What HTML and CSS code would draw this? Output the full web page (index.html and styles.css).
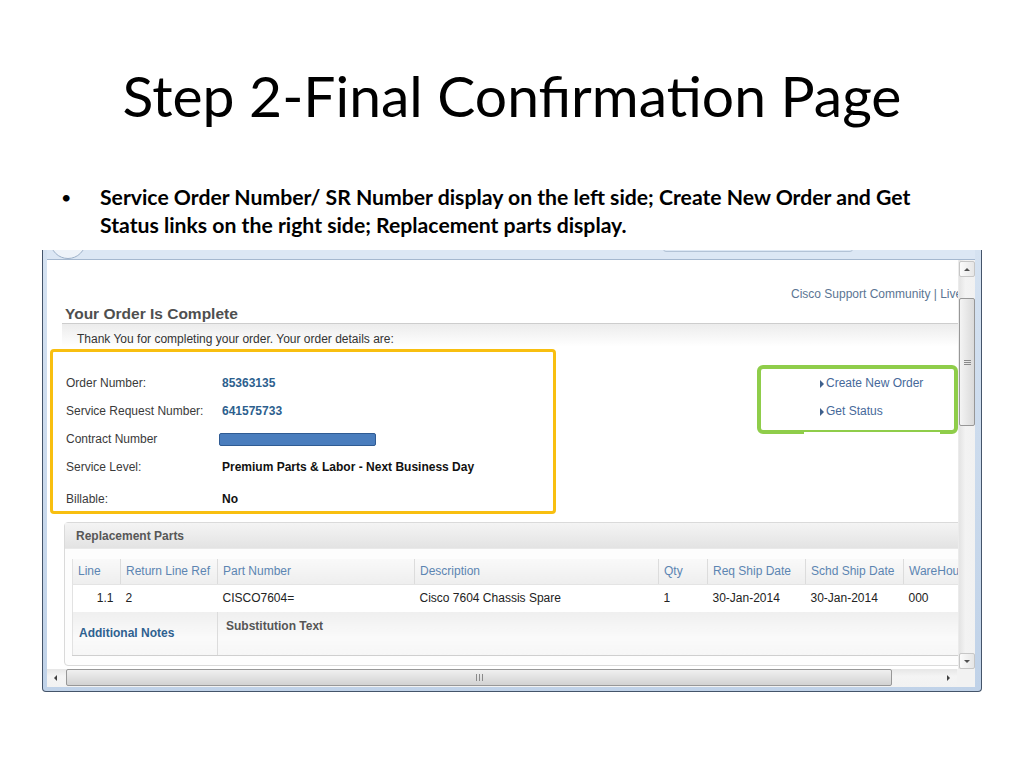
FILE: index.html
```html
<!doctype html>
<html>
<head>
<meta charset="utf-8">
<link rel="stylesheet" href="styles.css">
</head>
<body>
<h1 class="title">Step 2-Final Confirmation Page</h1>
<ul class="points">
	<li>Service Order Number/ SR Number display on the left side; Create New Order and Get<br>Status links on the right side; Replacement parts display.</li>
</ul>
<div class="win">
	<div class="toolbar"><span class="back"></span><span class="addr"></span></div>
	<div class="view">
		<div class="content">
			<div class="topnav">Cisco Support Community | Live</div>
			<h2 class="order_title">Your Order Is Complete</h2>
			<div class="thanks">Thank You for completing your order. Your order details are:</div>
			<div class="details">
				<div class="order_box">
					<div class="d_row"><span class="d_lbl">Order Number:</span><span class="d_val blue">85363135</span></div>
					<div class="d_row"><span class="d_lbl">Service Request Number:</span><span class="d_val blue">641575733</span></div>
					<div class="d_row"><span class="d_lbl">Contract Number</span><span class="hidden_val"></span></div>
					<div class="d_row"><span class="d_lbl">Service Level:</span><span class="d_val">Premium Parts &amp; Labor - Next Business Day</span></div>
					<div class="d_row last"><span class="d_lbl">Billable:</span><span class="d_val">No</span></div>
				</div>
				<div class="link_box">
					<div class="lnk">Create New Order</div>
					<div class="lnk">Get Status</div>
				</div>
			</div>
			<div class="panel">
				<div class="panel_hd">Replacement Parts</div>
				<div class="panel_bd">
					<table class="parts">
						<colgroup>
							<col style="width:48px"><col style="width:97px"><col style="width:197px"><col style="width:244px">
							<col style="width:49px"><col style="width:98px"><col style="width:98px"><col style="width:80px">
						</colgroup>
						<tr class="hd">
							<th>Line</th><th>Return Line Ref</th><th>Part Number</th><th>Description</th>
							<th>Qty</th><th>Req Ship Date</th><th>Schd Ship Date</th><th>WareHouse</th>
						</tr>
						<tr class="row">
							<td class="num">1.1</td><td>2</td><td>CISCO7604=</td><td>Cisco 7604 Chassis Spare</td>
							<td>1</td><td>30-Jan-2014</td><td>30-Jan-2014</td><td>000</td>
						</tr>
						<tr class="notes">
							<td colspan="2" class="notes_lbl">Additional Notes</td>
							<td colspan="6" class="subst">Substitution Text</td>
						</tr>
					</table>
				</div>
			</div>
		</div>
		<div class="vscroll">
			<div class="sbtn up"><span class="tri_up"></span></div>
			<div class="vthumb">
				<svg width="7" height="7" viewBox="0 0 7 7"><path d="M0 1.5H7M0 3.5H7M0 5.5H7" stroke="#8a8a8a" stroke-width="1"/></svg>
			</div>
			<div class="sbtn down"><span class="tri_down"></span></div>
		</div>
	</div>
	<div class="hscroll">
		<div class="hbtn"><span class="tri_left"></span></div>
		<div class="hthumb">
			<svg width="9" height="7" viewBox="0 0 9 7"><path d="M1.5 0V7M4.5 0V7M7.5 0V7" stroke="#8a8a8a" stroke-width="1"/></svg>
		</div>
		<div class="hbtn right"><span class="tri_right"></span></div>
		<div class="corner"></div>
	</div>
</div>
</body>
</html>
```

FILE: styles.css
```css
*{margin:0; padding:0; box-sizing:border-box;}
body{background:#fff; font-family:"Liberation Sans", Arial, sans-serif; font-size:12px; color:#333;}

.title{font-family:Lato, "Open Sans", sans-serif; font-weight:normal; font-size:57px; line-height:70px; text-align:center; color:#000; margin-top:60px;}
.points{list-style:none; margin-top:53px; font-family:Lato, "Open Sans", sans-serif; font-weight:bold; font-size:21.2px; line-height:28px; color:#000;}
.points li{position:relative; padding-left:100px;}
.points li:before{content:"\2022"; position:absolute; left:61px; top:0; font-weight:normal; font-size:18px;}

.win{margin:11px 0 0 42px; width:940px; height:442px; background:linear-gradient(#d5e2f1,#c0d2e8); border:1px solid #44546a; border-top:0; border-radius:0 0 4px 4px; padding:0 6px 4px 4px;}
.toolbar{height:10px; background:#dce7f4; border-bottom:1px solid #a5b8cf; display:flex; overflow:hidden;}
.back{flex:none; width:36px; height:36px; border-radius:50%; border:1px solid #9db1c9; background:#eef3f9; margin:-27px 0 0 3px;}
.addr{flex:none; width:190px; height:20px; border:1px solid #b3c3d6; border-radius:3px; margin:-18px 0 0 577px;}

.view{display:flex; height:409px;}
.content{flex:none; width:911px; overflow:hidden; background:#fff;}

.topnav{padding:26px 0 0 744px; line-height:16px; white-space:nowrap; color:#5b7593;}
.order_title{margin:3px 0 0 15px; padding-left:3px; font-size:15.5px; line-height:18px; font-weight:bold; color:#4f4f4f; border-bottom:1px solid #cdcdcd; white-space:nowrap;}
.thanks{margin-left:15px; padding:7px 0 2px 15px; line-height:16px; background:linear-gradient(#ececec,#fff 90%); white-space:nowrap;}

.details{display:flex; align-items:flex-start;}
.order_box{flex:none; width:506px; margin-left:3px; border:3px solid #f8bf10; border-radius:4px; padding:17px 0 0 13px;}
.d_row{display:flex; align-items:center; height:28px; white-space:nowrap;}
.d_row.last{margin-top:5px; height:25px;}
.d_lbl{width:156px; color:#3a3a3a;}
.d_val{font-weight:bold; color:#111;}
.d_val.blue{color:#2d5f8e;}
.hidden_val{width:157px; height:13px; margin-left:-3px; background:#4a7dbd; border:1px solid #2f5b93; border-radius:2px;}

.link_box{position:relative; flex:none; width:201px; height:69px; margin:16px 0 0 auto; border:4px solid #8fcd4a; border-radius:6px; padding:0 0 0 59px;}
.link_box:after{content:""; position:absolute; left:43px; right:14px; bottom:-4px; height:2px; background:#fff;}
.lnk{line-height:28px; color:#46699a; white-space:nowrap;}
.lnk:before{content:""; display:inline-block; border-left:4px solid #3d5f8c; border-top:4px solid transparent; border-bottom:4px solid transparent; margin-right:2px; vertical-align:-1px;}

.panel{width:920px; margin:8px 0 0 17px; border:1px solid #dadada; border-radius:4px; background:#fdfdfd;}
.panel_hd{height:26px; line-height:25px; padding:1px 0 0 11px; font-weight:bold; color:#575757; background:linear-gradient(#f4f4f4,#e3e3e3); border-bottom:1px solid #e9e9e9;}
.panel_bd{padding:10px 0 9px 7px;}

.parts{table-layout:fixed; width:911px; border-collapse:collapse; border-left:1px solid #e2e2e2;}
.parts th{height:25px; padding:0 5px; text-align:left; font-weight:normal; color:#5c85b2; background:linear-gradient(#f9f9f9,#eeeeee); border-right:1px solid #dcdcdc; border-bottom:1px solid #e4e4e4; white-space:nowrap; overflow:hidden;}
.parts .row td{height:28px; padding:0 5px; color:#222; background:#fff; white-space:nowrap;}
.parts .row td.num{text-align:right; padding-right:7px;}
.parts .notes td{height:43px; background:linear-gradient(#efefef,#fafafa 60%,#f6f6f6); border-bottom:1px solid #cfcfcf;}
.notes_lbl{padding-left:6px; font-weight:bold; color:#2f6190; border-right:1px solid #dcdcdc; vertical-align:middle;}
.subst{padding:7px 0 0 8px; vertical-align:top; font-weight:bold; color:#565656; line-height:14px;}

.vscroll{flex:none; width:17px; display:flex; flex-direction:column; align-items:center; background:linear-gradient(90deg,#e3e3e3,#f3f3f3 40%,#f1f1f1); border-left:1px solid #ebebeb;}
.sbtn{width:16px; height:16px; border:1px solid #c6c6c6; border-radius:2px; background:linear-gradient(90deg,#fbfbfb,#e6e6e6); display:flex; align-items:center; justify-content:center;}
.sbtn.up{margin-top:1px;}
.sbtn.down{margin-top:auto;}
.vthumb{width:16px; height:128px; margin-top:21px; border:1px solid #979797; border-radius:2px; background:linear-gradient(90deg,#f4f4f4,#dadada); display:flex; align-items:center; justify-content:center;}

.hscroll{display:flex; height:18px; background:linear-gradient(#e6e6e6,#f4f4f4 40%,#f2f2f2);}
.hbtn{flex:none; width:17px; height:18px; display:flex; align-items:center; justify-content:center;}
.hbtn.right{margin-left:auto;}
.hthumb{flex:none; width:826px; height:17px; margin-left:2px; border:1px solid #979797; border-radius:2px; background:linear-gradient(#f0f0f0,#d2d2d2); display:flex; align-items:center; justify-content:center;}
.corner{flex:none; width:18px; height:18px; background:#f2f2f2;}

.tri_up{border-left:3px solid transparent; border-right:3px solid transparent; border-bottom:3px solid #505050;}
.tri_down{border-left:3px solid transparent; border-right:3px solid transparent; border-top:3px solid #505050;}
.tri_left{border-top:3px solid transparent; border-bottom:3px solid transparent; border-right:3px solid #404040;}
.tri_right{border-top:3px solid transparent; border-bottom:3px solid transparent; border-left:3px solid #404040;}
```
